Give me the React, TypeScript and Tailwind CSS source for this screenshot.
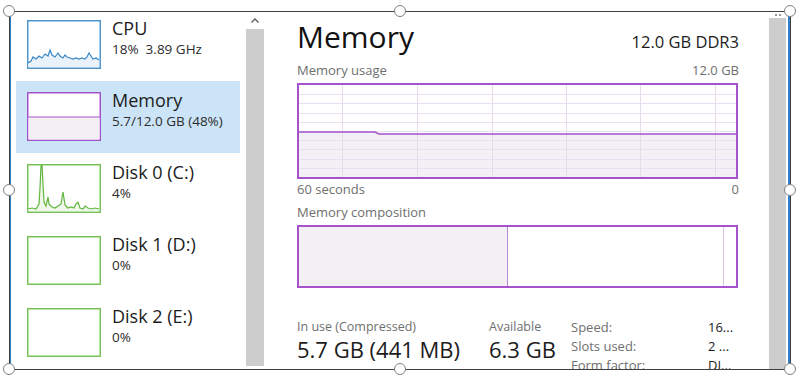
import React from "react";

const cpuPts =
  "1,43 4,41 6,37 9,39 12,36 15,38 18,34 21,36 23,30 25,35 28,37 31,33 33,36 36,38 38,35 40,37 43,38 46,39 49,38 52,39 55,38 58,39 60,37 62,33 64,36 66,39 69,38 72,40";
const diskPts =
  "1,45 5,44 9,45 12,40 13,24 14,2 15,1 16,20 17,38 19,42 21,33 22,40 25,43 28,44 31,42 34,40 36,28 38,41 41,44 44,43 47,44 49,40 51,38 53,44 56,45 58,42 61,44 64,45 68,44 72,45";

function Thumb({ kind }: { kind: "cpu" | "mem" | "disk0" | "disk" }) {
  if (kind === "cpu")
    return (
      <svg width={74} height={49} className="block shrink-0">
        <rect x={0.75} y={0.75} width={72.5} height={47.5} fill="#fff" stroke="#4e96cc" strokeWidth={1.5} />
        <polygon points={cpuPts + " 72,47 1,47"} fill="#e9f2fa" />
        <polyline points={cpuPts} fill="none" stroke="#3a88c5" strokeWidth={1.2} />
      </svg>
    );
  if (kind === "mem")
    return (
      <svg width={74} height={49} className="block shrink-0">
        <rect x={0.75} y={0.75} width={72.5} height={47.5} fill="#fff" stroke="#a552cc" strokeWidth={1.5} />
        <rect x={1.5} y={25} width={71} height={22.5} fill="#f3f0f4" />
        <line x1={1} y1={25} x2={73} y2={25} stroke="#a552cc" strokeWidth={1.2} />
      </svg>
    );
  return (
    <svg width={74} height={49} className="block shrink-0">
      <rect x={0.75} y={0.75} width={72.5} height={47.5} fill="#fff" stroke="#78c25a" strokeWidth={1.5} />
      {kind === "disk0" && (
        <>
          <polygon points={diskPts + " 72,47 1,47"} fill="#eef7e9" />
          <polyline points={diskPts} fill="none" stroke="#62b53e" strokeWidth={1.2} />
        </>
      )}
    </svg>
  );
}

const items = [
  { title: "CPU", sub: "18%  3.89 GHz", kind: "cpu" as const },
  { title: "Memory", sub: "5.7/12.0 GB (48%)", kind: "mem" as const, selected: true },
  { title: "Disk 0 (C:)", sub: "4%", kind: "disk0" as const },
  { title: "Disk 1 (D:)", sub: "0%", kind: "disk" as const },
  { title: "Disk 2 (E:)", sub: "0%", kind: "disk" as const },
];

function UsageGraph() {
  const vx = [43, 118, 193, 267, 341, 416];
  const hy = [9, 18, 28, 37, 46, 55, 64, 74, 83];
  return (
    <div className="w-[441px] h-[96px] border-2 border-[#a552cc]">
      <svg width={437} height={92} className="block">
        <polygon points="0,47 76,47 80,49 437,49 437,92 0,92" fill="#f3f0f5" />
        {hy.map((y) => (
          <line key={y} x1={0} y1={y + 0.5} x2={437} y2={y + 0.5} stroke="#eadff0" strokeWidth={1} />
        ))}
        {vx.map((x) => (
          <line key={x} x1={x + 0.5} y1={0} x2={x + 0.5} y2={92} stroke="#e6dbeb" strokeWidth={1} />
        ))}
        <polyline points="0,47 76,47 80,49 437,49" fill="none" stroke="#a552cc" strokeWidth={1.5} />
      </svg>
    </div>
  );
}

const handleSpots = [
  "left-[3px] top-[5px]",
  "left-[394px] top-[5px]",
  "left-[784px] top-[5px]",
  "left-[3px] top-[184px]",
  "left-[784px] top-[184px]",
  "left-[3px] top-[363px]",
  "left-[394px] top-[363px]",
  "left-[784px] top-[363px]",
];

export default function App() {
  return (
    <div className="relative w-[800px] h-[382px] bg-white overflow-hidden pl-[9px] pt-[11px] font-['Open_Sans',sans-serif]">
      <div className="w-[782px] h-[359px] border border-[#3f3f3f] flex overflow-hidden bg-white">
        <div className="w-[1px] bg-[#2f7fcf] shrink-0" />

        {/* sidebar */}
        <div className="w-[235px] shrink-0 flex flex-col pl-[5px] overflow-hidden">
          {items.map((it, i) => (
            <div
              key={it.title}
              className={`w-[224px] h-[72px] shrink-0 flex items-start pl-[11px] ${i === 0 ? "-mt-[3px]" : ""} ${it.selected ? "bg-[#cce4f7]" : ""}`}
            >
              <div className="mt-[11px]">
                <Thumb kind={it.kind} />
              </div>
              <div className="ml-[11px] mt-[9px] flex flex-col gap-[2px]">
                <div className="text-[18px] leading-[20px] text-[#1c1c1c] whitespace-nowrap">{it.title}</div>
                <div className="text-[13.5px] leading-[18px] text-[#2c2c2c] whitespace-pre">{it.sub}</div>
              </div>
            </div>
          ))}
        </div>

        {/* sidebar scrollbar */}
        <div className="w-[18px] shrink-0 flex flex-col">
          <div className="h-[17px] flex items-center justify-center">
            <svg width={8} height={5} className="block">
              <polyline points="0.5,4.5 4,1 7.5,4.5" fill="none" stroke="#5a5a5a" strokeWidth={1.3} />
            </svg>
          </div>
          <div className="flex-1 bg-[#cdcdcd]" />
          <div className="h-[3px]" />
        </div>

        {/* main */}
        <div className="flex-1 flex flex-col pl-[33px] pr-[30px] pt-[5px] overflow-hidden">
          <div className="shrink-0 flex items-baseline justify-between h-[40px]">
            <div className="text-[30px] leading-[40px] text-[#111]">Memory</div>
            <div className="text-[16.5px] leading-[40px] text-[#1c1c1c]">12.0 GB DDR3</div>
          </div>
          <div className="shrink-0 mt-[5px] flex justify-between text-[13px] leading-[16px] text-[#6f6f6f]">
            <span>Memory usage</span>
            <span>12.0 GB</span>
          </div>
          <div className="shrink-0 mt-[5px]">
            <UsageGraph />
          </div>
          <div className="shrink-0 mt-[2px] flex justify-between text-[13px] leading-[16px] text-[#6f6f6f]">
            <span>60 seconds</span>
            <span>0</span>
          </div>
          <div className="shrink-0 mt-[7px] text-[13px] leading-[16px] text-[#6f6f6f]">Memory composition</div>
          <div className="shrink-0 mt-[5px] w-[441px] h-[63px] border-2 border-[#a552cc] flex">
            <div className="w-[209px] bg-[#f2f0f3] border-r border-[#b987d4]" />
            <div className="flex-1 border-r border-[#dcc6e8]" />
            <div className="w-[12px]" />
          </div>
          <div className="shrink-0 mt-[31px] flex">
            <div className="w-[192px] flex flex-col">
              <div className="text-[12.5px] leading-[16px] text-[#6f6f6f] whitespace-nowrap">In use (Compressed)</div>
              <div className="text-[22px] leading-[28px] text-[#1c1c1c] whitespace-nowrap">5.7 GB (441 MB)</div>
            </div>
            <div className="w-[82px] flex flex-col">
              <div className="text-[12.5px] leading-[16px] text-[#6f6f6f]">Available</div>
              <div className="text-[22px] leading-[28px] text-[#1c1c1c] whitespace-nowrap">6.3 GB</div>
            </div>
            <div className="flex flex-col -mt-[1px] text-[13px] leading-[19px]">
              {[
                ["Speed:", "16..."],
                ["Slots used:", "2 ..."],
                ["Form factor:", "DI..."],
              ].map(([k, v]) => (
                <div key={k} className="flex">
                  <span className="w-[137px] text-[#6f6f6f]">{k}</span>
                  <span className="text-[#1c1c1c]">{v}</span>
                </div>
              ))}
            </div>
          </div>
        </div>

        {/* right scrollbar */}
        <div className="w-[17px] shrink-0 flex flex-col">
          <div className="h-[6px] flex items-center justify-center gap-[2px]">
            <span className="w-[2px] h-[2px] rounded-full bg-[#777]" />
            <span className="w-[2px] h-[2px] rounded-full bg-[#777]" />
          </div>
          <div className="flex-1 bg-[#cdcdcd]" />
        </div>
        <div className="w-[2px] shrink-0" />
        <div className="w-[2px] shrink-0 bg-[#2f7fcf]" />
      </div>

      {handleSpots.map((c) => (
        <div
          key={c}
          className={`absolute ${c} w-[12px] h-[12px] rounded-full bg-white border-[1.5px] border-[#808080]`}
        />
      ))}
    </div>
  );
}
